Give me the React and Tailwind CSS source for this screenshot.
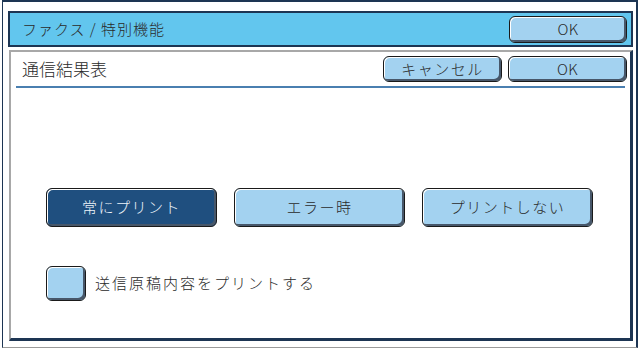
const font = { fontFamily: '"Noto Sans CJK JP", "Liberation Sans", sans-serif' }

function Btn({ children, className = "" }) {
  return (
    <button
      className={`flex items-center justify-center rounded-[6px] border border-[#1a1a1a] text-[15px] font-light shadow-[inset_-2px_-2px_0_#47576a,inset_1px_1px_0_#ffffff] ${className}`}
    >
      {children}
    </button>
  )
}

export default function App() {
  return (
    <div className="h-[351px] w-[640px] overflow-hidden bg-white text-[#2a2a2a]" style={font}>
      <div className="ml-[2px] flex h-[348px] w-[636px] flex-col border-t-2 border-r-2 border-l border-b border-t-[#1d3553] border-r-[#1d3553] border-l-[#1d3553] border-b-[#9a9a9a] pl-[5px] pr-[2px] pt-[9px]">
        <div className="flex h-[36px] w-[625px] items-center justify-between border-2 border-[#1d3553] bg-[#62c6ee] pl-[12px] pr-[4px]">
          <span className="text-[15px] font-light tracking-[1px]">ファクス / 特別機能</span>
          <Btn className="h-[27px] w-[118px] bg-[#a3d2f0] tracking-[0.5px]">OK</Btn>
        </div>

        <div className="mt-[3px] ml-px flex h-[291px] w-[624px] flex-col border-t-2 border-l-2 border-r-[3px] border-b-[3px] border-t-[#a8a8a8] border-l-[#a8a8a8] border-r-[#1d3553] border-b-[#1d3553]">
          <div className="flex items-center justify-between pl-[11px] pr-[3px] pt-[4px]">
            <span className="text-[17px] font-light">通信結果表</span>
            <div className="flex gap-[6px]">
              <Btn className="h-[26px] w-[119px] bg-[#a3d2f0] tracking-[1.5px]">キャンセル</Btn>
              <Btn className="h-[26px] w-[119px] bg-[#a3d2f0] tracking-[0.5px]">OK</Btn>
            </div>
          </div>
          <div className="mx-[5px] mt-[4px] h-[2px] bg-[#4a7fb0]" />

          <div className="mt-[100px] flex gap-[17px] pl-[35px]">
            <Btn className="h-[39px] w-[171px] bg-[#1f4f7f] text-[#eef4fa] tracking-[1.5px]">常にプリント</Btn>
            <Btn className="h-[39px] w-[171px] bg-[#a3d2f0] tracking-[1.5px]">エラー時</Btn>
            <Btn className="h-[39px] w-[171px] bg-[#a3d2f0] tracking-[1.5px]">プリントしない</Btn>
          </div>

          <div className="mt-[39px] flex items-center gap-[9px] pl-[35px]">
            <Btn className="h-[35px] w-[40px] bg-[#a3d2f0]" />
            <span className="text-[15px] font-light tracking-[2px]">送信原稿内容をプリントする</span>
          </div>
        </div>
      </div>
    </div>
  )
}
